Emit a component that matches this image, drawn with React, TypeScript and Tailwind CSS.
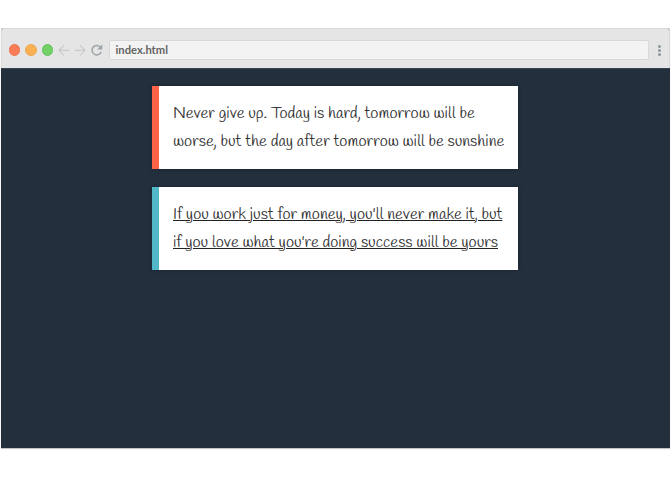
import React from "react";

function Toolbar() {
  return (
    <header className="flex h-10 items-center rounded-t-[3px] border border-b-0 border-[#d9d9d9] bg-[#e5e5e5] pt-[3px] pl-[6.5px]">
      <div className="flex gap-[5px]">
        <span className="size-[11.5px] rounded-full border border-[#ed7350] bg-[#fb7c55]" />
        <span className="size-[11.5px] rounded-full border border-[#efa84d] bg-[#fbb054]" />
        <span className="size-[11.5px] rounded-full border border-[#68c45f] bg-[#71d167]" />
      </div>
      <svg className="ml-[3.5px] h-4 w-12 shrink-0" viewBox="0 0 48 16" fill="none">
        <g stroke="#c7cbcc" strokeWidth="1.2">
          <path d="M12 8.3H2M7 3.3L2 8.3l5 5" />
          <path d="M18 8.3h10M23 3.3l5 5-5 5" />
        </g>
        <path d="M43.2 5A4.7 4.7 0 1 0 44.2 9.7" stroke="#9da5a8" strokeWidth="1.5" />
        <path d="M45.3 2.4v5.2h-5.2z" fill="#9da5a8" />
      </svg>
      <div className="ml-[4px] flex h-5 w-[540px] shrink-0 items-center rounded-[2px] border border-[#d8d8d8] bg-[#f3f3f3] pl-[6px] font-['Lato',sans-serif] text-[11.2px] leading-none font-bold text-[#646464]">
        index.html
      </div>
      <div className="ml-[9px] flex flex-col gap-[1px]">
        <i className="size-[3px] rounded-full bg-[#8b989c]" />
        <i className="size-[3px] rounded-full bg-[#8b989c]" />
        <i className="size-[3px] rounded-full bg-[#8b989c]" />
      </div>
    </header>
  );
}

export default function App() {
  return (
    <div className="h-[480px] w-[671px] overflow-hidden bg-white pt-7 pl-px">
      <div className="h-[420px] w-[669px] rounded-t-[3px] bg-[#232f3d] shadow-[0_1px_1px_#bdbdc3]">
        <Toolbar />
        <main className="flex flex-col gap-[18px] border-t border-[#35454f] pt-[17.4px] pl-[151px] font-['Handlee','Lato',cursive] text-[16.5px] leading-[27.5px] whitespace-nowrap text-[#333]">
          <p className="h-[82.5px] w-[366.4px] border-l-[7px] border-[#ff6347] bg-white pt-[14.8px] pl-[14px] shadow-[0_0_3px_#17212c]">
            <span className="block">Never give up. Today is hard, tomorrow will be</span>
            <span className="block">worse, but the day after tomorrow will be sunshine</span>
          </p>
          <p className="h-[82.7px] w-[366.4px] border-l-[7px] border-[#50b8c7] bg-white pt-[14px] pl-[14px] leading-[28px] underline decoration-[#222] decoration-1 underline-offset-1 shadow-[0_0_3px_#17212c]">
            <span className="block">If you work just for money, you'll never make it, but</span>
            <span className="block">if you love what you're doing success will be yours</span>
          </p>
        </main>
      </div>
    </div>
  );
}
